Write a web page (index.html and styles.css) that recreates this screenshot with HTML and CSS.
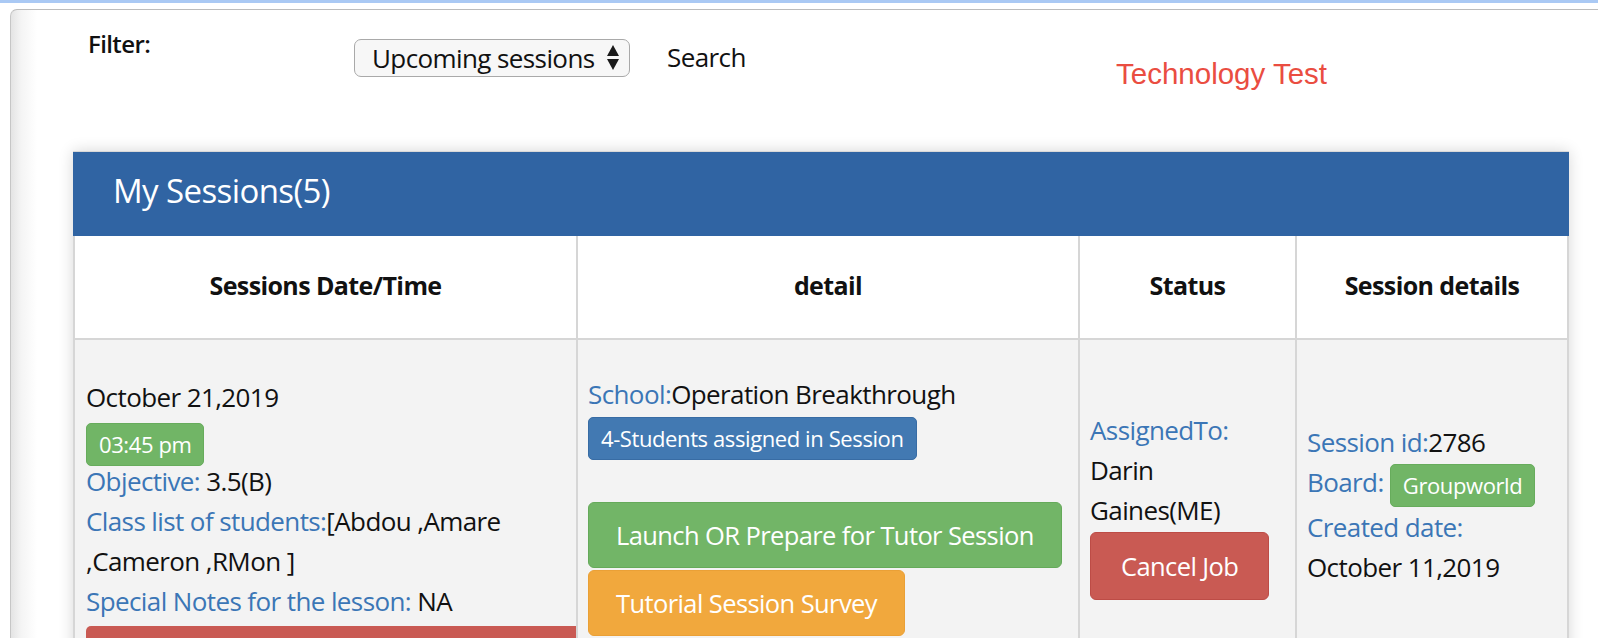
FILE: index.html
```html
<!DOCTYPE html>
<html>
<head>
<meta charset="utf-8">
<link rel="stylesheet" href="styles.css">
</head>
<body>
<div class="topline"></div>
<div class="frame">
  <div class="toolbar">
    <div class="filter-label">Filter:</div>
    <div class="select">
      <span>Upcoming sessions</span>
      <svg class="arrows" width="12" height="26" viewBox="0 0 12 26"><path d="M6 0 L12 11 H0 Z"/><path d="M0 14 H12 L6 25 Z"/></svg>
    </div>
    <div class="search">Search</div>
    <div class="tech">Technology Test</div>
  </div>

  <div class="panel">
    <div class="panel-heading">My Sessions(5)</div>
    <table class="sessions">
      <thead>
        <tr>
          <th class="w1">Sessions Date/Time</th>
          <th class="w2">detail</th>
          <th class="w3">Status</th>
          <th class="w4">Session details</th>
        </tr>
      </thead>
      <tbody>
        <tr>
          <td class="c1">
            <div>October 21,2019</div>
            <span class="badge green time">03:45 pm</span>
            <div><span class="lbl">Objective:</span> 3.5(B)</div>
            <div><span class="lbl">Class list of students:</span>[Abdou ,Amare ,Cameron ,RMon ]</div>
            <div><span class="lbl">Special Notes for the lesson:</span> NA</div>
            <div class="red-bar">Download the (Please Upload and Print Word Doc)</div>
          </td>
          <td class="c2">
            <div><span class="lbl">School:</span>Operation Breakthrough</div>
            <span class="badge blue students">4-Students assigned in Session</span>
            <span class="btn green launch">Launch OR Prepare for Tutor Session</span>
            <span class="btn orange survey">Tutorial Session Survey</span>
          </td>
          <td class="c3">
            <div class="lbl">AssignedTo:</div>
            <div>Darin Gaines(ME)</div>
            <span class="btn red cancel">Cancel Job</span>
          </td>
          <td class="c4">
            <div><span class="lbl">Session id:</span>2786</div>
            <div><span class="lbl">Board:</span> <span class="badge green board">Groupworld</span></div>
            <div class="lbl">Created date:</div>
            <div>October 11,2019</div>
          </td>
        </tr>
      </tbody>
    </table>
  </div>
</div>
</body>
</html>
```

FILE: styles.css
```css
html, body {
  margin: 0;
  padding: 0;
  background: #fff;
}

body {
  font-family: "Open Sans", "Noto Sans", sans-serif;
  color: #111;
  overflow: hidden;
}

.topline {
  height: 3px;
  background: #aac9f4;
}

.frame {
  margin: 6px 0 0 10px;
  border-top: 1px solid #bcbcbc;
  border-left: 1px solid #c6c6c6;
  border-top-left-radius: 7px;
  background: linear-gradient(90deg, #e4e4e4 0, #f4f4f4 10px, #fff 26px);
  min-height: 640px;
}

/* ---------- toolbar ---------- */
.toolbar {
  display: flex;
  align-items: flex-start;
  height: 141px;
  padding-left: 77px;
}

.filter-label {
  width: 266px;
  margin-top: 18px;
  font-size: 24px;
  line-height: 32px;
  font-weight: 600;
  letter-spacing: -0.6px;
}

.select {
  margin-top: 29px;
  width: 276px;
  height: 38px;
  box-sizing: border-box;
  border: 1.5px solid #a9a9a9;
  border-radius: 7px;
  background: #f7f7f7;
  display: flex;
  align-items: center;
  justify-content: space-between;
  padding: 0 10px 0 17px;
  font-size: 26px;
  letter-spacing: -0.6px;
}

.arrows path {
  fill: #1a1a1a;
}

.search {
  margin: 28px 0 0 37px;
  width: 449px;
  line-height: 38px;
  font-size: 26px;
  letter-spacing: -0.6px;
}

.tech {
  margin-top: 48px;
  font-family: "Liberation Sans", Arial, sans-serif;
  font-size: 29.5px;
  line-height: 32px;
  color: #ea4d41;
}

/* ---------- panel ---------- */
.panel {
  margin: 0 29px 0 62px;
  background: #fff;
  box-shadow: 0 0 14px rgba(0, 0, 0, 0.16);
  border-top: 1px solid #d8d8d8;
}

.panel-heading {
  background: #3064a3;
  height: 84px;
  line-height: 78px;
  padding-left: 40px;
  color: #fff;
  font-size: 33px;
  letter-spacing: -0.6px;
}

.sessions {
  width: 100%;
  table-layout: fixed;
  border-collapse: separate;
  border-spacing: 0;
}

.sessions th,
.sessions td {
  box-sizing: border-box;
  border-right: 2px solid #d6d6d6;
  border-bottom: 2px solid #d6d6d6;
  padding: 0 10px;
}

.sessions th:first-child,
.sessions td:first-child {
  border-left: 2px solid #d6d6d6;
}

.w1 { width: 505px; }
.w2 { width: 502px; }
.w3 { width: 217px; }
.w4 { width: 272px; }

.sessions th {
  height: 104px;
  background: #fff;
  font-size: 25px;
  font-weight: 700;
  letter-spacing: -0.6px;
  text-align: center;
  vertical-align: middle;
  padding-bottom: 4px;
}

.sessions td {
  background: #f3f3f3;
  vertical-align: middle;
  font-size: 26px;
  line-height: 40px;
  letter-spacing: -0.6px;
}

.sessions td.c1 {
  padding-top: 37px;
  padding-bottom: 0;
  padding-left: 11px;
  vertical-align: top;
}

.lbl {
  color: #3b76b6;
}

/* ---------- badges ---------- */
.badge {
  display: inline-block;
  box-sizing: border-box;
  height: 43px;
  line-height: 41px;
  padding: 0 12px;
  border-radius: 5px;
  color: #fff;
  font-size: 22px;
  letter-spacing: -0.4px;
  vertical-align: middle;
  border: 1px solid transparent;
}

.badge.green {
  background: #71b566;
  border-color: #67ac5c;
}

.badge.blue {
  background: #4279b2;
  border-color: #386ca4;
}

.time {
  display: block;
  width: fit-content;
  margin: 6px 0 -5px;
}

.students {
  display: block;
  width: fit-content;
  margin-top: 3px;
}

.red-bar {
  margin: 5px -10px 0 0;
  height: 43px;
  line-height: 41px;
  padding-left: 24px;
  background: #c95a53;
  color: #fff;
  font-size: 22px;
  letter-spacing: -0.5px;
  border-radius: 5px 0 0 5px;
  white-space: nowrap;
  overflow: hidden;
}

/* ---------- buttons ---------- */
.btn {
  display: block;
  width: fit-content;
  box-sizing: border-box;
  height: 66px;
  line-height: 64px;
  padding: 0 27px;
  border-radius: 6px;
  color: #fff;
  font-size: 25.5px;
  letter-spacing: -0.6px;
  border: 1px solid transparent;
}

.btn.green {
  background: #72b567;
  border-color: #65aa5a;
}

.btn.orange {
  background: #f1a83d;
  border-color: #eaa036;
}

.btn.red {
  background: #c95a53;
  border-color: #bd4c46;
}

.launch {
  margin-top: 42px;
}

.survey {
  margin-top: 2px;
}

.cancel {
  margin-top: 2px;
  height: 68px;
  line-height: 66px;
  padding: 0 30px;
}
```
